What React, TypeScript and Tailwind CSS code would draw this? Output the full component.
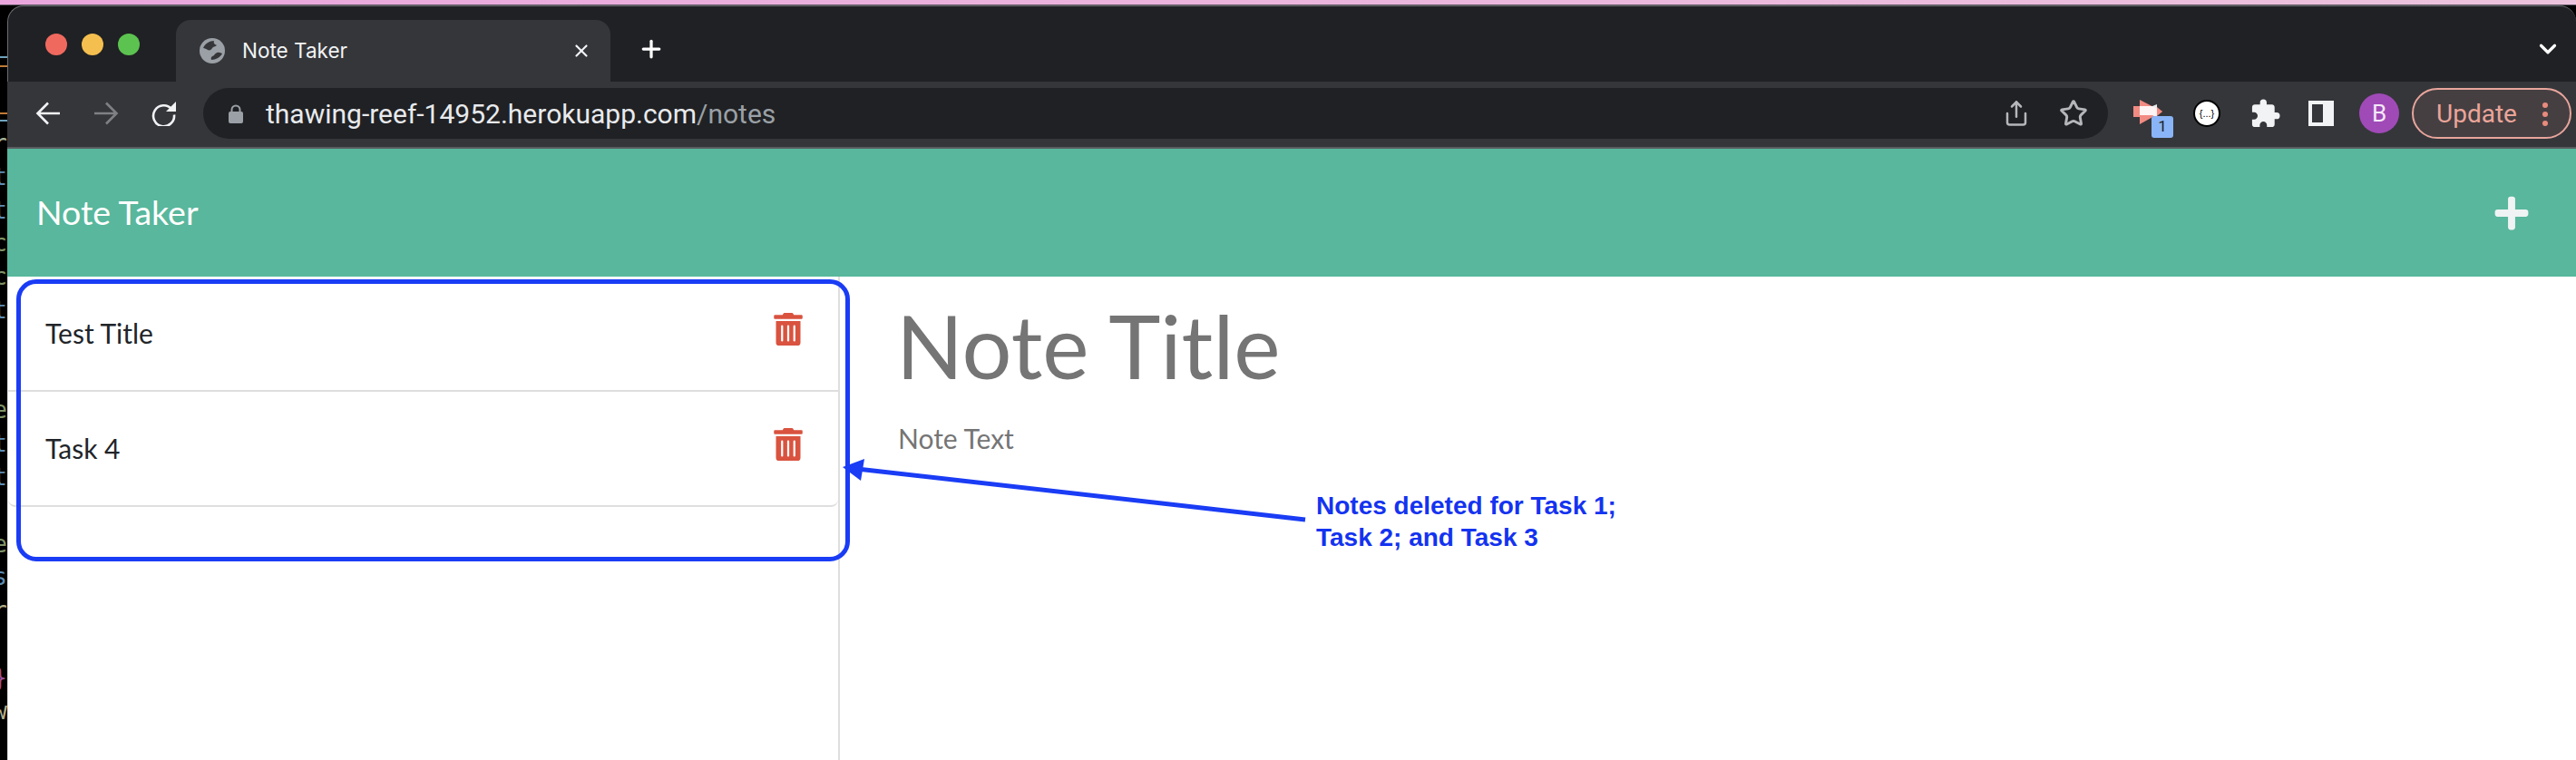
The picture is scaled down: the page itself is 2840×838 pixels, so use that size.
import { FaPlus, FaTrashAlt } from "react-icons/fa";
import { MdExtension } from "react-icons/md";
import { ChevronDown, Plus, Share, Star, X } from "lucide-react";

// what shows of the editor window behind the browser, one entry per line
const behindLines = [
  { ch: "r", color: "text-[#a9b49b]" },
  { ch: "t", color: "text-[#5d8db5]" },
  { ch: "t", color: "text-[#5d8db5]" },
  { ch: "c", color: "text-[#7f9468]" },
  { ch: "c", color: "text-[#7f9468]" },
  { ch: "t", color: "text-[#5d8db5]" },
  { ch: "", color: "" },
  { ch: "", color: "" },
  { ch: "e", color: "text-[#7f9468]" },
  { ch: "t", color: "text-[#5d8db5]" },
  { ch: "t", color: "text-[#5d8db5]" },
  { ch: "", color: "" },
  { ch: "e", color: "text-[#7f9468]" },
  { ch: "s", color: "text-[#5d8db5]" },
  { ch: "r", color: "text-[#b5b08a]" },
  { ch: "", color: "" },
  { ch: "}", color: "text-[#a0509c]" },
  { ch: "w", color: "text-[#b5b08a]" },
  { ch: "", color: "" },
  { ch: "}", color: "text-[#a0509c]" },
];

const notes = ["Test Title", "Task 4"];

function BehindStrip() {
  return (
    <div className="w-[8px] shrink-0 bg-black overflow-hidden flex flex-col">
      <div className="h-[56px] shrink-0" />
      <div className="h-[2px] shrink-0 bg-[#6fa3bd]" />
      <div className="h-[8px] shrink-0" />
      <div className="h-[2px] shrink-0 bg-[#c07a35]" />
      <div className="h-[50px] shrink-0" />
      <div className="h-[2px] shrink-0 bg-[#c07a35]" />
      <div className="h-[6px] shrink-0" />
      <div className="h-[2px] shrink-0 bg-[#6fa3bd]" />
      <div className="flex flex-col pt-[6px]">
        {behindLines.map((line, i) => (
          <div
            key={i}
            className={`h-[36.8px] shrink-0 flex justify-end text-[26px] leading-[36px] [font-family:'DejaVu_Sans_Mono',monospace] ${line.color}`}
          >
            <span>{line.ch}</span>
          </div>
        ))}
      </div>
    </div>
  );
}

function GlobeIcon() {
  return (
    <svg width="28" height="28" viewBox="0 0 28 28">
      <circle cx="14" cy="14" r="14" fill="#9aa0a6" />
      <path d="M4 11c2-5 7-8 12-8-1 3 1 4 3 5-2 2-4 1-5 3-1 2-3 3-5 2-2-1-3-2-5-2z" fill="#35363a" />
      <path d="M13 24c-1-3 1-4 3-5 1-2 4-4 6-3 2 0 2 1 3 1-2 4-7 7-12 7z" fill="#35363a" />
    </svg>
  );
}

function BackArrow({ color }: { color: string }) {
  return (
    <svg width="28" height="26" viewBox="0 0 28 26" fill="none" stroke={color} strokeWidth="2.6">
      <path d="M27 13H3M14 1.500L2.500 13 14 24.500" />
    </svg>
  );
}

function ReloadIcon() {
  return (
    <svg width="28" height="28" viewBox="0 0 28 28" fill="none">
      <path d="M22.500 9.500A11.500 11.500 0 1 0 25 15.500" stroke="#f1f3f4" strokeWidth="2.600" />
      <path d="M27 1v11H16z" fill="#f1f3f4" />
    </svg>
  );
}

function LockIcon() {
  return (
    <svg width="16" height="21" viewBox="0 0 16 21">
      <path d="M3.500 9V6a4.500 4.500 0 0 1 9 0v3" fill="none" stroke="#9aa0a6" strokeWidth="2" />
      <rect x="0" y="8" width="16" height="13" rx="2" fill="#9aa0a6" />
    </svg>
  );
}

function RecorderIcon() {
  return (
    <div className="relative w-[44px] h-[42px]">
      <svg width="32" height="27" viewBox="0 0 32 27" className="absolute left-0 top-0">
        <path d="M7 0l25 13L7 27v-8H0V7h7z" fill="#f28b82" />
        <path d="M7 7h14l5 -2v15l-5-3H7z" fill="#fff" opacity="0.9" />
        <path d="M26 8l6 5-6 5z" fill="#f28b82" />
      </svg>
      <div className="absolute right-0 bottom-0 w-[24px] h-[24px] rounded-[3px] bg-[#8ab4f8] flex items-center justify-center text-[#202124] text-[17px] [font-family:Roboto,sans-serif]">
        1
      </div>
    </div>
  );
}

function BrowserChrome() {
  return (
    <>
      <div className="h-[84px] shrink-0 bg-[#202124] rounded-t-[18px] border-t border-l border-[#6b6d70] flex items-end">
        <div className="w-[185px] shrink-0 h-full pl-[41px] pt-[30px] flex gap-[16px]">
          <div className="w-[24px] h-[24px] rounded-full bg-[#f0695f]" />
          <div className="w-[24px] h-[24px] rounded-full bg-[#f5bf4f]" />
          <div className="w-[24px] h-[24px] rounded-full bg-[#5cc350]" />
        </div>
        <div className="w-[479px] h-[68px] shrink-0 bg-[#35363a] rounded-t-[16px] flex items-start pt-[20px] pl-[26px] pr-[21px]">
          <GlobeIcon />
          <span className="ml-[19px] text-[#f1f3f4] text-[22.5px] leading-[28px] [font-family:Inter,sans-serif]">
            Note Taker
          </span>
          <X className="ml-auto mt-[3px] text-[#f1f3f4]" size={22} strokeWidth={2.4} />
        </div>
        <div className="flex-1 h-full flex items-start pt-[32px] pl-[30px] pr-[16px] justify-between">
          <Plus className="text-white" size={30} strokeWidth={2.6} />
          <ChevronDown className="text-white" size={30} strokeWidth={2.6} />
        </div>
      </div>
      <div className="h-[74px] shrink-0 bg-[#35363a] border-b-2 border-[#5a5d60] flex items-center pr-[3px] pb-[2px]">
        <div className="w-[216px] shrink-0 pl-[31px] flex items-center">
          <BackArrow color="#f1f3f4" />
          <div className="ml-[36px] rotate-180">
            <BackArrow color="#7f8083" />
          </div>
          <div className="ml-[36px]">
            <ReloadIcon />
          </div>
        </div>
        <div className="w-[2100px] h-[56px] shrink-0 rounded-full bg-[#202124] flex items-center pl-[28px] pr-[22px]">
          <LockIcon />
          <span className="ml-[25px] pt-[2px] text-[30px] leading-[34px] text-[#e8eaed] [font-family:Roboto,sans-serif]">
            thawing-reef-14952.herokuapp.com<span className="text-[#9aa0a6]">/notes</span>
          </span>
          <Share className="ml-auto text-[#b5b7ba]" size={30} strokeWidth={2} />
          <Star className="ml-[32px] text-[#b5b7ba]" size={32} strokeWidth={2.2} />
        </div>
        <div className="ml-[28px] mt-[12px]">
          <RecorderIcon />
        </div>
        <div className="ml-[22px] w-[30px] h-[30px] rounded-full bg-white border-2 border-black flex items-center justify-center text-black text-[11px] [font-family:'Liberation_Sans',sans-serif]">
          {"{...}"}
        </div>
        <MdExtension className="ml-[32px] text-[#f1f3f4]" size={35} />
        <div className="ml-[30px] w-[28px] h-[28px] bg-[#f1f3f4] pl-[4px] pr-[12px] py-[4px]">
          <div className="w-full h-full bg-[#35363a]" />
        </div>
        <div className="ml-[28px] w-[44px] h-[44px] rounded-full bg-[#a04ab8] flex items-center justify-center text-[#f3e8f7] text-[26px] [font-family:Roboto,sans-serif]">
          B
        </div>
        <div className="ml-[14px] w-[176px] h-[56px] rounded-full border-[2.5px] border-[#e8a59c] bg-[#453f42] flex items-center pl-[25px] pt-[2px] text-[#eba599] text-[28px] [font-family:Roboto,sans-serif]">
          Update
          <div className="ml-[28px] flex flex-col gap-[4px]">
            <div className="w-[6px] h-[6px] rounded-full bg-[#e88b7d]" />
            <div className="w-[6px] h-[6px] rounded-full bg-[#e88b7d]" />
            <div className="w-[6px] h-[6px] rounded-full bg-[#e88b7d]" />
          </div>
        </div>
      </div>
    </>
  );
}

function NoteList() {
  return (
    <div className="w-[918px] shrink-0 border-r-2 border-l border-[#dedede]">
      {notes.map((title) => (
        <div
          key={title}
          className="h-[127px] border-b-2 border-[#dedede] pl-[41px] pr-[37px] flex justify-between items-center last:rounded-b-[8px]"
        >
          <span className="text-[30px] text-[#212529] [font-family:Lato,sans-serif]">{title}</span>
          <FaTrashAlt className="self-start mt-[40px] text-[#d9533f]" size={36} />
        </div>
      ))}
    </div>
  );
}

function NoteEditor() {
  return (
    <div className="flex-1 pl-[64px] [font-family:Lato,sans-serif] text-[#757575]">
      <h1 className="mt-[26px] -ml-[2px] text-[97px] leading-[100px]">Note Title</h1>
      <p className="mt-[32px] text-[30px] leading-[40px]">Note Text</p>
    </div>
  );
}

export default function App() {
  return (
    <div className="relative w-[2840px] h-[838px] overflow-hidden bg-black flex flex-col">
      <div className="h-[6px] shrink-0 border-b border-[#55505a] bg-gradient-to-r from-[#e9a6dc] to-[#ecc3dd]" />
      <div className="flex-1 flex min-h-0">
        <BehindStrip />
        <div className="flex-1 flex flex-col min-w-0">
          <BrowserChrome />
          <header className="h-[141px] shrink-0 bg-[#58b79c] flex items-center justify-between pl-[32px] pr-[50px]">
            <span className="text-white text-[37.5px] [font-family:Lato,sans-serif]">Note Taker</span>
            <FaPlus className="text-[#eff3f3]" size={42} />
          </header>
          <div className="flex-1 flex bg-white min-h-0">
            <NoteList />
            <NoteEditor />
          </div>
        </div>
      </div>

      {/* annotation drawn on top of the screenshot */}
      <div className="absolute left-[18px] top-[308px] w-[919px] h-[311px] rounded-[22px] border-[5px] border-[#1a3cf5]" />
      <svg className="absolute left-0 top-0 pointer-events-none" width="2840" height="838">
        <line x1="1439" y1="573" x2="945" y2="517" stroke="#1a3cf5" strokeWidth="5" />
        <polygon points="929,515 953,506 949,530" fill="#1a3cf5" />
      </svg>
      <div className="absolute left-[1451px] top-[540px] text-[28px] leading-[35px] font-bold text-[#1433f0] [font-family:'Liberation_Sans',sans-serif]">
        Notes deleted for Task 1;
        <br />
        Task 2; and Task 3
      </div>
    </div>
  );
}
